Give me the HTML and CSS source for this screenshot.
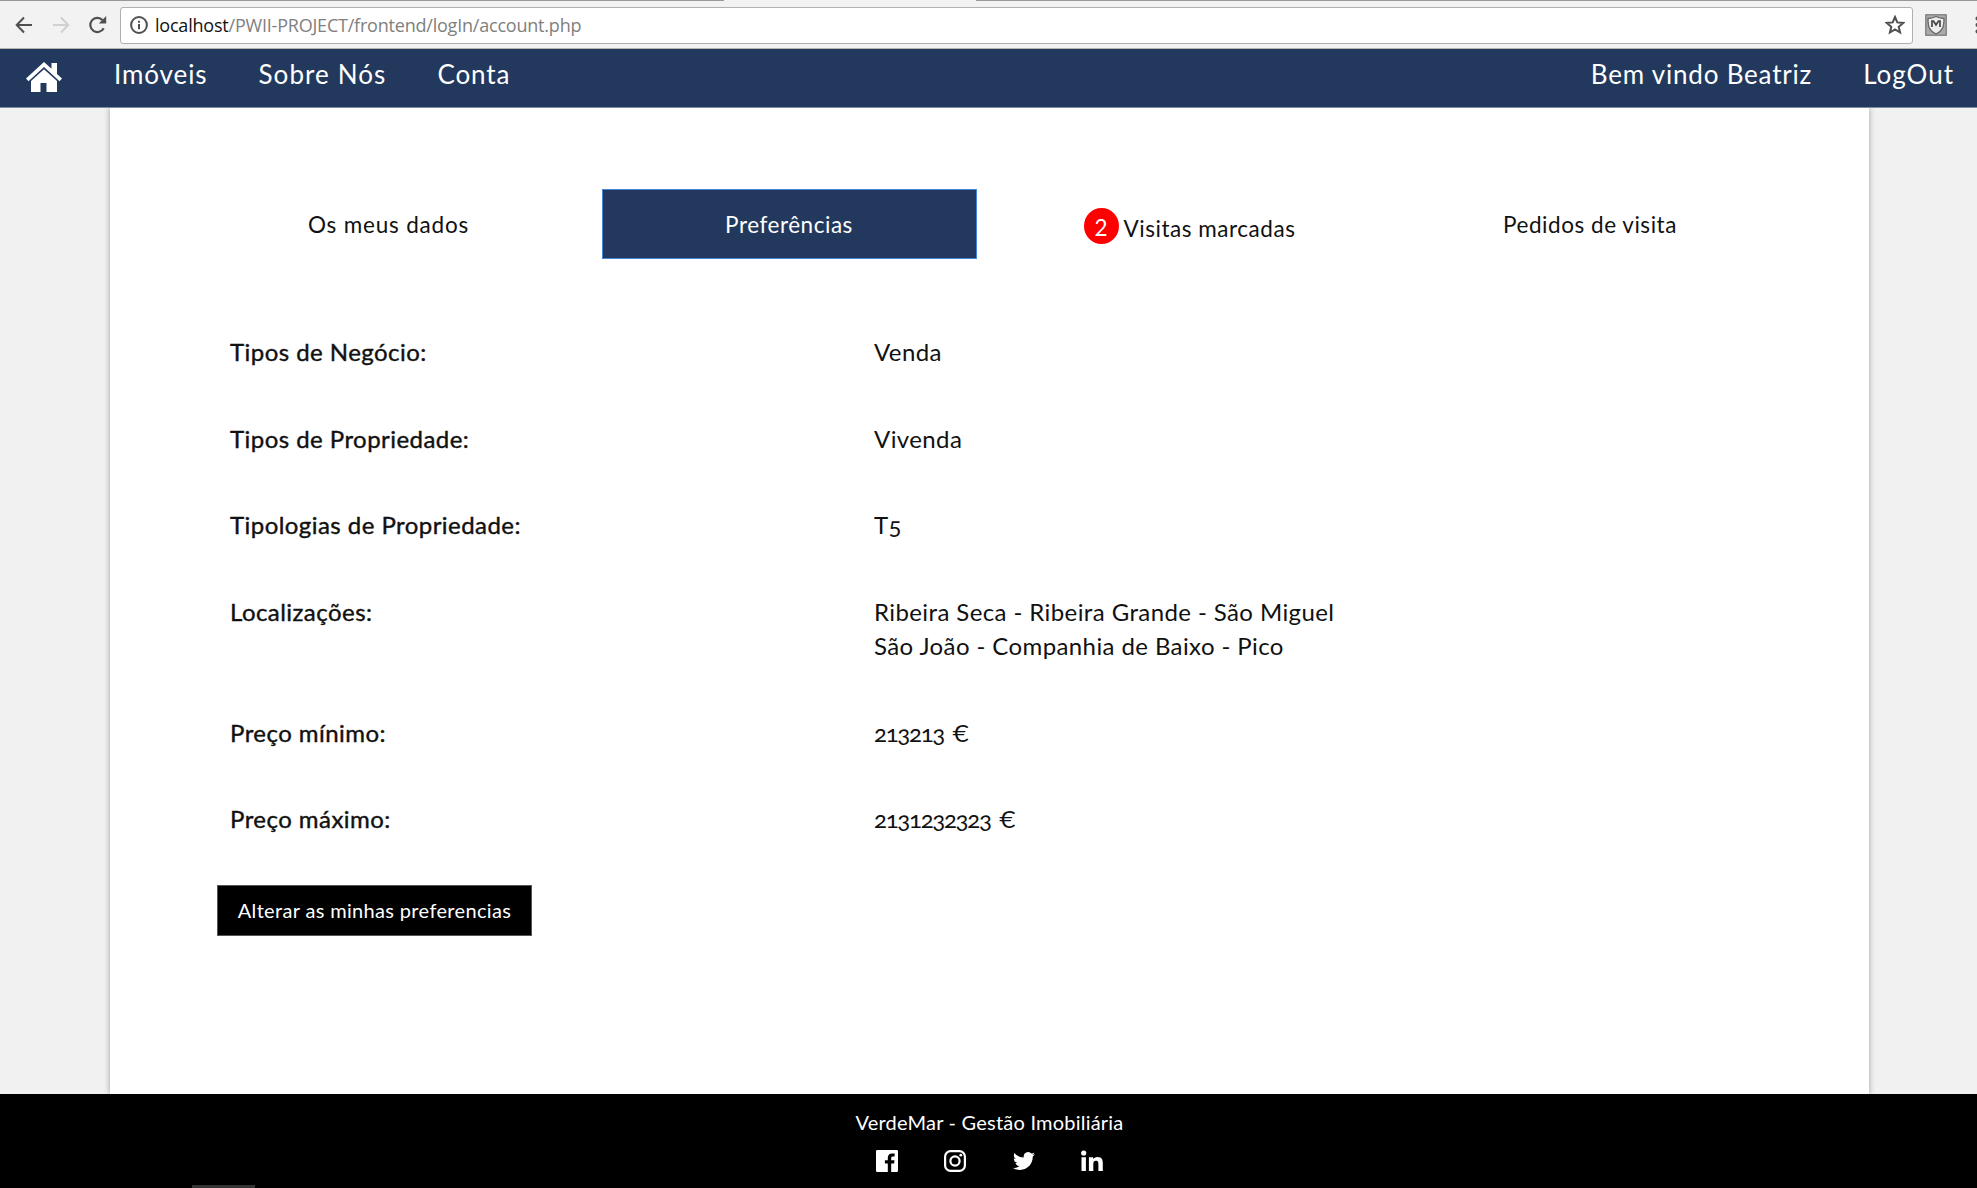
FILE: index.html
```html
<!DOCTYPE html>
<html lang="pt">
<head>
<meta charset="utf-8">
<title>VerdeMar - Conta</title>
<link rel="stylesheet" href="styles.css">
</head>
<body>
<div class="browser">
  <div class="tabstrip"><i></i><i></i></div>
  <div class="toolbar">
    <svg class="back" viewBox="0 0 18 18"><path d="M17 9H2M9 1.5 1.7 9 9 16.5"/></svg>
    <svg class="forward" viewBox="0 0 18 18"><path d="M1 9h15M9 1.5 16.3 9 9 16.5"/></svg>
    <svg class="reload" viewBox="0 0 18 18"><path d="M15.2 12.2A7.1 7.1 0 1 1 14 4"/><path class="tip" d="M17.7 0v7.5h-7.4z"/></svg>
    <div class="address">
      <svg class="info" viewBox="0 0 18 18"><circle cx="9" cy="9" r="7.9"/><path d="M9 8v5.2M9 4.7v2"/></svg>
      <span class="url"><b>localhost</b>/PWII-PROJECT/frontend/logIn/account.php</span>
      <svg class="star" viewBox="0 0 20 20"><path d="m10 2 2.3 5.4 5.9.5-4.5 3.9 1.4 5.7-5.1-3-5.1 3 1.4-5.7-4.5-3.9 5.9-.5z"/></svg>
    </div>
    <svg class="shield" viewBox="0 0 22 22"><rect x=".5" y=".5" width="21" height="21" rx="2.5" fill="#aaa" stroke="#888"/><path d="M3 4.5q4 0 8-2 4 2 8 2c0 8-1 12-8 15.500-7-3.500-8-7.500-8-15.500z" fill="#eee" stroke="#666" stroke-width="1.300"/><path d="M7 13V7h1.500L11 11l2.500-4H15v6" fill="none" stroke="#444" stroke-width="1.700"/></svg>
    <svg class="menu" viewBox="0 0 2 18"><circle cx="2.500" cy="2.500" r="2"/><circle cx="2.500" cy="9" r="2"/><circle cx="2.500" cy="15.500" r="2"/></svg>
  </div>
</div>
<nav class="nav">
  <svg class="home" viewBox="0 0 36 30"><path d="M18 0 0 16.500l2.500 2.700L18 5l15.500 14.200 2.500-2.700-5-4.600V1h-5.500v5.800z"/><path d="M18 7.200 5 19v11h9.500v-9h6v9H31V19z"/></svg>
  <a class="first">Imóveis</a><a class="about">Sobre Nós</a><a>Conta</a>
  <a class="welcome">Bem vindo Beatriz</a><a class="logout">LogOut</a>
</nav>
<main class="page">
  <div class="tabs">
    <a class="data">Os meus dados</a>
    <a class="active">Preferências</a>
    <a class="with-badge"><span class="badge">2</span>Visitas marcadas</a>
    <a>Pedidos de visita</a>
  </div>
  <dl class="prefs">
    <dt>Tipos de Negócio:</dt><dd>Venda</dd>
    <dt>Tipos de Propriedade:</dt><dd>Vivenda</dd>
    <dt>Tipologias de Propriedade:</dt><dd>T5</dd>
    <dt>Localizações:</dt><dd>Ribeira Seca - Ribeira Grande - São Miguel<br>São João - Companhia de Baixo - Pico</dd>
    <dt>Preço mínimo:</dt><dd class="price">213213 <span>€</span></dd>
    <dt>Preço máximo:</dt><dd class="price">2131232323 <span>€</span></dd>
  </dl>
  <button class="edit">Alterar as minhas preferencias</button>
</main>
<footer class="footer">
  <p>VerdeMar - Gestão Imobiliária</p>
  <div class="social">
    <svg viewBox="0 0 22 22"><path d="M1.200 0h19.600Q22 0 22 1.200v19.600q0 1.200-1.200 1.200H15.200v-8.500h2.900l.4-3.300h-3.300V8.100c0-1 .3-1.600 1.700-1.600h1.700v-3c-.3 0-1.300-.1-2.500-.1-2.600 0-4.300 1.500-4.300 4.400v2.400H8.900v3.300h2.900V22H1.200Q0 22 0 20.800V1.200Q0 0 1.200 0z"/></svg>
    <svg viewBox="0 0 22 22"><g fill="none" stroke="#fff" stroke-width="2.200"><rect x="1.100" y="1.100" width="19.800" height="19.800" rx="5.500"/><circle cx="11" cy="11" r="4.600"/></g><circle cx="16.800" cy="5.200" r="1.400"/></svg>
    <svg viewBox="0 0 24 24"><path d="M23.950 4.570a10 10 0 0 1-2.820.77 4.960 4.960 0 0 0 2.160-2.720c-.95.550-2 .95-3.130 1.180a4.920 4.920 0 0 0-8.380 4.480C7.690 8.090 4.070 6.130 1.640 3.160a4.820 4.820 0 0 0-.67 2.480c0 1.710.87 3.210 2.190 4.100a4.900 4.900 0 0 1-2.230-.62v.06a4.920 4.920 0 0 0 3.950 4.830 5 5 0 0 1-2.210.08 4.940 4.940 0 0 0 4.600 3.420A9.870 9.870 0 0 1 0 19.540a14 14 0 0 0 7.550 2.210c9.050 0 14-7.500 14-13.980 0-.21 0-.42-.02-.63a9.940 9.940 0 0 0 2.420-2.570z"/></svg>
    <svg viewBox="0 0 22 22"><circle cx="2.700" cy="3" r="2.600"/><path d="M.5 7.200h4.400V21H.5zM7.900 7.200h4.200v1.900c.7-1.200 2.200-2.200 4.400-2.200 4.500 0 5.300 2.800 5.300 6.700V21h-4.400v-6.600c0-1.700-.1-3.700-2.400-3.700s-2.700 1.700-2.700 3.600V21H7.900z"/></svg>
  </div>
  <div class="taskbar"></div>
</footer>
</body>
</html>
```
FILE: styles.css
```css
* { box-sizing: border-box; }
body { margin: 0; width: 1977px; height: 1188px; overflow: hidden; background: #f1f1f1; color: #111; font-family: Lato, "Open Sans", sans-serif; display: flex; flex-direction: column; }

.browser { height: 49px; background: #f2f2f2; border-bottom: 1px solid #b5b5b0; flex: none; }
.tabstrip { height: 2px; display: flex; justify-content: space-between; }
.tabstrip i { width: 724px; height: 1px; background: #999; }
.tabstrip i + i { width: 1001px; }
.toolbar { display: flex; align-items: center; height: 45px; padding-left: 15px; }
.toolbar svg { flex: none; fill: none; stroke: #505050; stroke-width: 2; }
.back, .forward { width: 18px; height: 18px; }
.toolbar .forward { margin-left: 19px; stroke: #d0d0d0; }
.toolbar .reload { width: 19px; height: 18px; margin-left: 18px; stroke-width: 2.2; }
.toolbar .tip { fill: #505050; stroke: none; }
.address { display: flex; align-items: center; width: 1793px; height: 37px; margin: 1px 0 0 13px; padding: 0 7px 0 9px; background: #fff; border: 1px solid #b0b0b0; border-radius: 3px; flex: none; }
.info { width: 18px; height: 18px; }
.url { margin-left: 7px; font: 18px "Open Sans", sans-serif; letter-spacing: -.21px; color: #808080; white-space: nowrap; }
.url b { font-weight: 400; color: #111; }
.star { width: 20px; height: 20px; margin-left: auto; }
.shield { width: 22px; height: 22px; margin-left: 12px; }
.toolbar .menu { width: 2px; height: 18px; margin-left: auto; fill: #505050; stroke: none; }

.nav { height: 59px; flex: none; background: #22395d; border-bottom: 1px solid #7f8ba0; color: #fff; display: flex; align-items: flex-start; padding: 8px 23px 0 26px; font-size: 26px; line-height: 34px; letter-spacing: .9px; white-space: nowrap; }
.nav a { margin-left: 51px; }
.home { width: 36px; height: 30px; margin-top: 5px; fill: #fff; flex: none; }
.nav .first { margin-left: 52px; }
.nav .about { letter-spacing: 1.1px; }
.nav .welcome { margin-left: auto; letter-spacing: .8px; }
.nav .logout { letter-spacing: 1px; }

.page { width: 1759px; height: 986px; flex: none; margin-left: 110px; background: #fff; box-shadow: 0 0 6px rgba(0,0,0,.35); padding: 81px 91px 0; clip-path: inset(0 -8px); }
.tabs { display: grid; grid-template-columns: repeat(4, 375px); gap: 25.5px; height: 70px; white-space: nowrap; font-size: 22.5px; letter-spacing: .53px; }
.tabs a { display: flex; align-items: center; justify-content: center; }
.tabs .data { letter-spacing: .8px; }
.tabs .active { background: #22395d; color: #fff; border: 1px solid #4484e0; }
.tabs .with-badge { padding: 8px 0 0; }
.badge { width: 35px; height: 36px; border-radius: 50%; background: red; color: #fff; display: grid; place-items: center; margin: -4px 5px 0 0; padding-top: 2px; letter-spacing: 0; }

.prefs { display: grid; grid-template-columns: 644px 1fr; margin: 50px 0 0; padding-left: 29px; font-size: 24px; line-height: 34.5px; }
.prefs dt, .prefs dd { margin: 0; padding: 26px 0; }
.prefs dt { letter-spacing: .45px; -webkit-text-stroke: .4px #111; }
.prefs dd { letter-spacing: .4px; font-variant-numeric: oldstyle-nums; }
.prefs .price { letter-spacing: -1.3px; }
.price span { margin-left: 3px; font-variant-numeric: lining-nums; }

.edit { display: block; width: 315px; height: 51px; margin: 22px 0 0 16px; background: #000; color: #fff; border: 1px solid #555; border-radius: 0; font: 20px Lato, sans-serif; letter-spacing: .34px; padding: 0; white-space: nowrap; }

.footer { flex: 1; background: #000; color: #fff; display: flex; flex-direction: column; align-items: center; padding-top: 15px; position: relative; }
.footer p { margin: 0 0 0 2px; font-size: 20px; line-height: 26px; letter-spacing: .22px; }
.social { display: flex; gap: 46.5px; margin: 15px 0 0 2px; }
.social svg { width: 22px; height: 22px; fill: #fff; }
.taskbar { position: absolute; left: 192px; bottom: 0; width: 63px; height: 3px; background: #333; }
```
